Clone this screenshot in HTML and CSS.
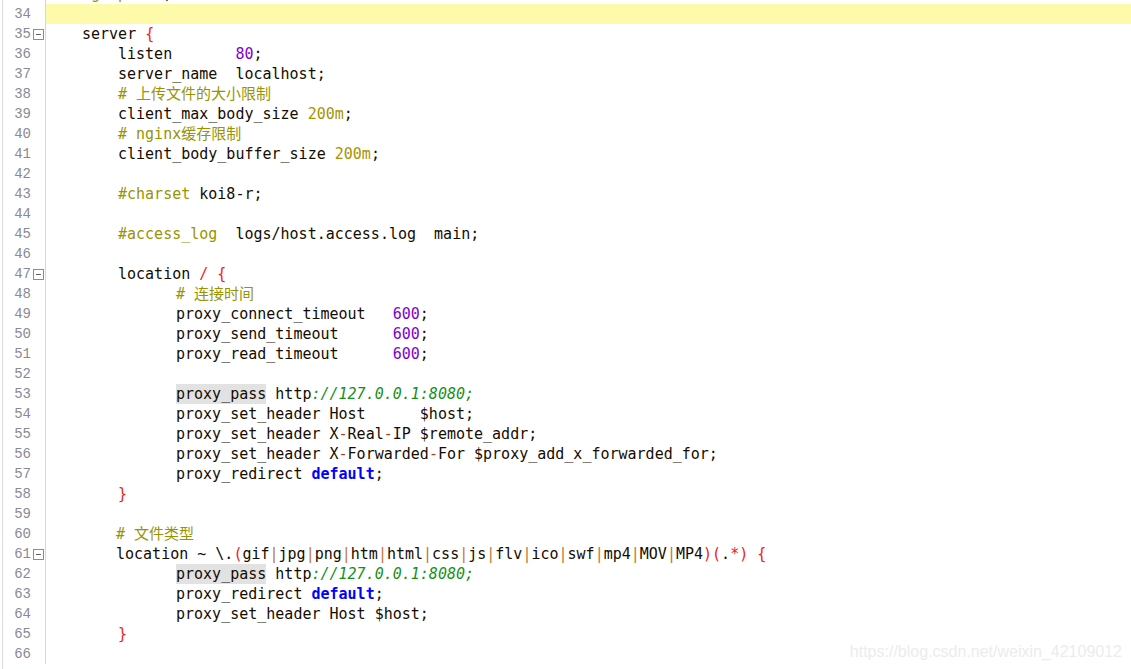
FILE: index.html
```html
<!DOCTYPE html>
<html lang="zh-CN">
<head>
    <meta charset="UTF-8">
    <title>nginx.conf</title>
    <link rel="stylesheet" href="styles.css">
</head>
<body>
    <div class="editor">
        <div class="row"><span class="num">33</span><span class="fold"></span><span class="code in1"><span class="cm">#gzip</span>  on;</span></div>
        <div class="row current"><span class="num">34</span><span class="fold"></span><span class="code"></span></div>
        <div class="row"><span class="num">35</span><span class="fold"><i class="box"></i></span><span class="code in1">server <span class="op">{</span></span></div>
        <div class="row"><span class="num">36</span><span class="fold"></span><span class="code in2">listen       <span class="nb">80</span>;</span></div>
        <div class="row"><span class="num">37</span><span class="fold"></span><span class="code in2">server_name  localhost;</span></div>
        <div class="row"><span class="num">38</span><span class="fold"></span><span class="code in2"><span class="cm"># 上传文件的大小限制</span></span></div>
        <div class="row"><span class="num">39</span><span class="fold"></span><span class="code in2">client_max_body_size <span class="sz">200m</span>;</span></div>
        <div class="row"><span class="num">40</span><span class="fold"></span><span class="code in2"><span class="cm"># nginx缓存限制</span></span></div>
        <div class="row"><span class="num">41</span><span class="fold"></span><span class="code in2">client_body_buffer_size <span class="sz">200m</span>;</span></div>
        <div class="row"><span class="num">42</span><span class="fold"></span><span class="code"></span></div>
        <div class="row"><span class="num">43</span><span class="fold"></span><span class="code in2"><span class="cm">#charset</span> koi8-r;</span></div>
        <div class="row"><span class="num">44</span><span class="fold"></span><span class="code"></span></div>
        <div class="row"><span class="num">45</span><span class="fold"></span><span class="code in2"><span class="cm">#access_log</span>  logs/host.access.log  main;</span></div>
        <div class="row"><span class="num">46</span><span class="fold"></span><span class="code"></span></div>
        <div class="row"><span class="num">47</span><span class="fold"><i class="box"></i></span><span class="code in2">location <span class="op">/</span> <span class="op">{</span></span></div>
        <div class="row"><span class="num">48</span><span class="fold"></span><span class="code in3"><span class="cm"># 连接时间</span></span></div>
        <div class="row"><span class="num">49</span><span class="fold"></span><span class="code in3">proxy_connect_timeout   <span class="nb">600</span>;</span></div>
        <div class="row"><span class="num">50</span><span class="fold"></span><span class="code in3">proxy_send_timeout      <span class="nb">600</span>;</span></div>
        <div class="row"><span class="num">51</span><span class="fold"></span><span class="code in3">proxy_read_timeout      <span class="nb">600</span>;</span></div>
        <div class="row"><span class="num">52</span><span class="fold"></span><span class="code"></span></div>
        <div class="row"><span class="num">53</span><span class="fold"></span><span class="code in3"><span class="hl">proxy_pass</span> http<span class="url">://127.0.0.1:8080;</span></span></div>
        <div class="row"><span class="num">54</span><span class="fold"></span><span class="code in3">proxy_set_header Host      $host;</span></div>
        <div class="row"><span class="num">55</span><span class="fold"></span><span class="code in3">proxy_set_header X<span class="dash">-</span>Real<span class="dash">-</span>IP $remote_addr;</span></div>
        <div class="row"><span class="num">56</span><span class="fold"></span><span class="code in3">proxy_set_header X<span class="dash">-</span>Forwarded<span class="dash">-</span>For $proxy_add_x_forwarded_for;</span></div>
        <div class="row"><span class="num">57</span><span class="fold"></span><span class="code in3">proxy_redirect <span class="kw">default</span>;</span></div>
        <div class="row"><span class="num">58</span><span class="fold"></span><span class="code in2"><span class="op">}</span></span></div>
        <div class="row"><span class="num">59</span><span class="fold"></span><span class="code"></span></div>
        <div class="row"><span class="num">60</span><span class="fold"></span><span class="code in2b"><span class="cm"># 文件类型</span></span></div>
        <div class="row"><span class="num">61</span><span class="fold"><i class="box"></i></span><span class="code in2b">location ~ \.<span class="op">(</span>gif<span class="pp">|</span>jpg<span class="pp">|</span>png<span class="pp">|</span>htm<span class="pp">|</span>html<span class="pp">|</span>css<span class="pp">|</span>js<span class="pp">|</span>flv<span class="pp">|</span>ico<span class="pp">|</span>swf<span class="pp">|</span>mp4<span class="pp">|</span>MOV<span class="pp">|</span>MP4<span class="op">)(</span>.<span class="op">*)</span> <span class="op">{</span></span></div>
        <div class="row"><span class="num">62</span><span class="fold"></span><span class="code in3"><span class="hl">proxy_pass</span> http<span class="url">://127.0.0.1:8080;</span></span></div>
        <div class="row"><span class="num">63</span><span class="fold"></span><span class="code in3">proxy_redirect <span class="kw">default</span>;</span></div>
        <div class="row"><span class="num">64</span><span class="fold"></span><span class="code in3">proxy_set_header Host $host;</span></div>
        <div class="row"><span class="num">65</span><span class="fold"></span><span class="code in2"><span class="op">}</span></span></div>
        <div class="row"><span class="num">66</span><span class="fold"></span><span class="code"></span></div>
    </div>
    <div class="watermark">https://blog.csdn.net/weixin_42109012</div>
</body>
</html>
```

FILE: styles.css
```css
html, body {
    margin: 0;
    padding: 0;
    background-color: #ffffff;
    height: 100%;
    overflow: hidden;
}

body {
    position: relative;
}

.editor {
    margin-top: -16px;
    margin-left: 2px;
    border-left: 1px solid #dcdcdc;
    min-height: 700px;
}

.row {
    display: flex;
    height: 20px;
    line-height: 20px;
}

.num {
    width: 28px;
    text-align: right;
    font-family: "Liberation Mono", monospace;
    font-size: 14px;
    color: #8a8a94;
}

.fold {
    width: 14px;
    display: flex;
    align-items: center;
    justify-content: center;
}

.box {
    display: block;
    position: relative;
    width: 9px;
    height: 9px;
    border: 1px solid #8c8c8c;
    margin-left: 1px;
}

.box::after {
    content: "";
    position: absolute;
    left: 2px;
    right: 2px;
    top: 4px;
    height: 1px;
    background-color: #606060;
}

.code {
    flex: 1;
    border-left: 1px solid #d8d8d8;
    padding-left: 1px;
    white-space: pre;
    font-family: "DejaVu Sans Mono", "Noto Sans CJK SC", monospace;
    font-size: 15px;
    color: #140c00;
}

.current .code {
    background-color: #fdfbaa;
}

.in1 { padding-left: 36px; }
.in2 { padding-left: 72px; }
.in2b { padding-left: 70px; }
.in3 { padding-left: 130px; }

.cm { color: #979400; }
.nb { color: #8000d0; }
.sz { color: #a89400; }
.op { color: #f02020; }
.kw { color: #0000ff; font-weight: bold; }
.url { color: #149014; font-style: italic; }
.dash { color: #a03c20; }
.pp { color: #c07838; }

.hl {
    background-color: #e2e2e2;
    display: inline-block;
    height: 20px;
}

.watermark {
    position: absolute;
    right: 9px;
    bottom: 8px;
    font-family: "Liberation Sans", Arial, sans-serif;
    font-size: 16px;
    color: #ececec;
}
```
